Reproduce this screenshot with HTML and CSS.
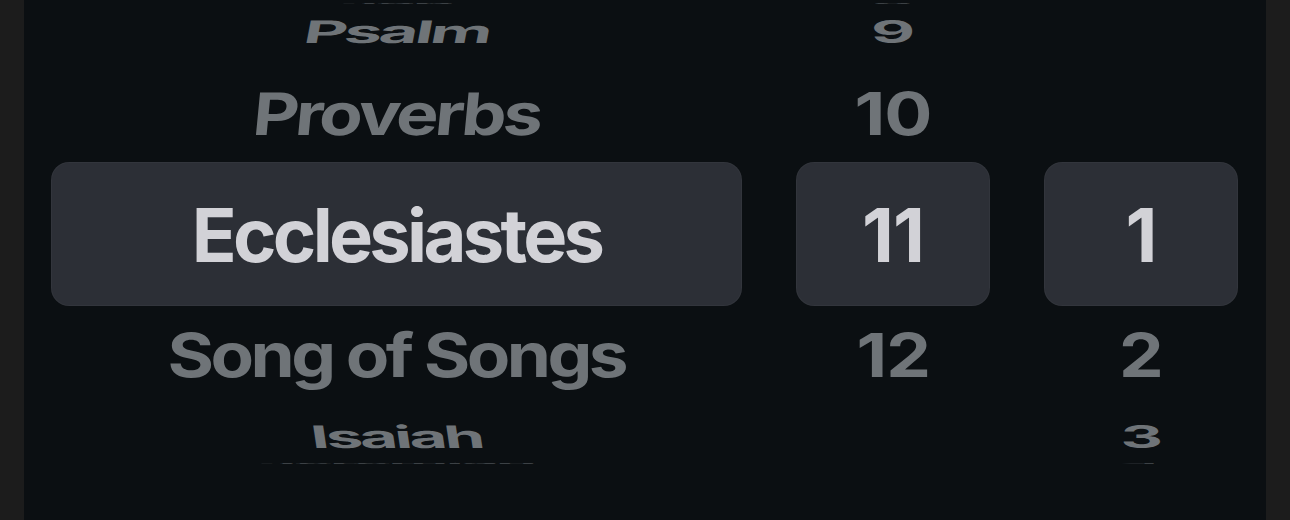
FILE: index.html
```html
<!DOCTYPE html>
<html lang="en">
<head>
<meta charset="utf-8">
<title>Bible passage picker</title>
<link rel="stylesheet" href="styles.css">
</head>
<body>
<div class="frame">
  <div class="picker">
    <div class="wheel wheel-book">
      <div class="sel"></div>
      <div class="item r-3">Job</div>
      <div class="item r-2 lean">Psalm</div>
      <div class="item r-1 lean">Proverbs</div>
      <div class="item r0">Ecclesiastes</div>
      <div class="item r1">Song of Songs</div>
      <div class="item r2 lean-back">Isaiah</div>
      <div class="item r3">Jeremiah</div>
    </div>
    <div class="wheel">
      <div class="sel"></div>
      <div class="item r-3">8</div>
      <div class="item r-2">9</div>
      <div class="item r-1">10</div>
      <div class="item r0">11</div>
      <div class="item r1">12</div>
    </div>
    <div class="wheel">
      <div class="sel"></div>
      <div class="item r0">1</div>
      <div class="item r1">2</div>
      <div class="item r2">3</div>
      <div class="item r3">4</div>
    </div>
  </div>
</div>
</body>
</html>
```

FILE: styles.css
```css
* { box-sizing: border-box; }

html, body {
  margin: 0;
  height: 100%;
  background: #1c1c1c;
  overflow: hidden;
}

.frame {
  height: 520px;
  padding: 0 24px;
}

.picker {
  height: 100%;
  background: #0b0f12;
  display: grid;
  grid-template-columns: 691px 194px 194px;
  column-gap: 54px;
  padding: 162px 28px 0 27px;
  align-items: start;
  font-family: Inter, "Noto Sans", sans-serif;
  font-weight: 700;
  font-size: 74px;
  line-height: 1;
  letter-spacing: -1px;
}

.wheel {
  display: grid;
  height: 144px;
  place-items: center;
}

.wheel-book {
  letter-spacing: -3.7px;
}

.wheel > * {
  grid-area: 1 / 1;
}

.sel {
  width: 100%;
  height: 144px;
  border-radius: 18px;
  background: #2c2f36;
  box-shadow: inset 0 0 0 1px rgba(255, 255, 255, 0.03);
}

.item {
  white-space: nowrap;
  color: #6f7478;
}

.r0 {
  color: #d2d2d7;
  transform: translateY(1px);
}

.r-1 { transform: translateY(-120px) scale(0.965, 0.79); }
.r1  { transform: translateY(121px) scale(0.96, 0.82); }
.r-2 { transform: translateY(-202px) scale(0.92, 0.42); }
.r2  { transform: translateY(203px) scale(0.89, 0.42); }
.r-3 { transform: translateY(-230px) scale(0.9, 0.016); color: #3c4145; }
.r3  { transform: translateY(230px) scale(0.9, 0.016); color: #3c4145; }

.r-1.lean { transform: translateY(-120px) scale(0.965, 0.79) skewX(-4.5deg); }
.r-2.lean { transform: translateY(-202px) scale(0.92, 0.42) skewX(-5deg); }
.r2.lean-back { transform: translateY(203px) scale(0.89, 0.42) skewX(4deg); }
```
